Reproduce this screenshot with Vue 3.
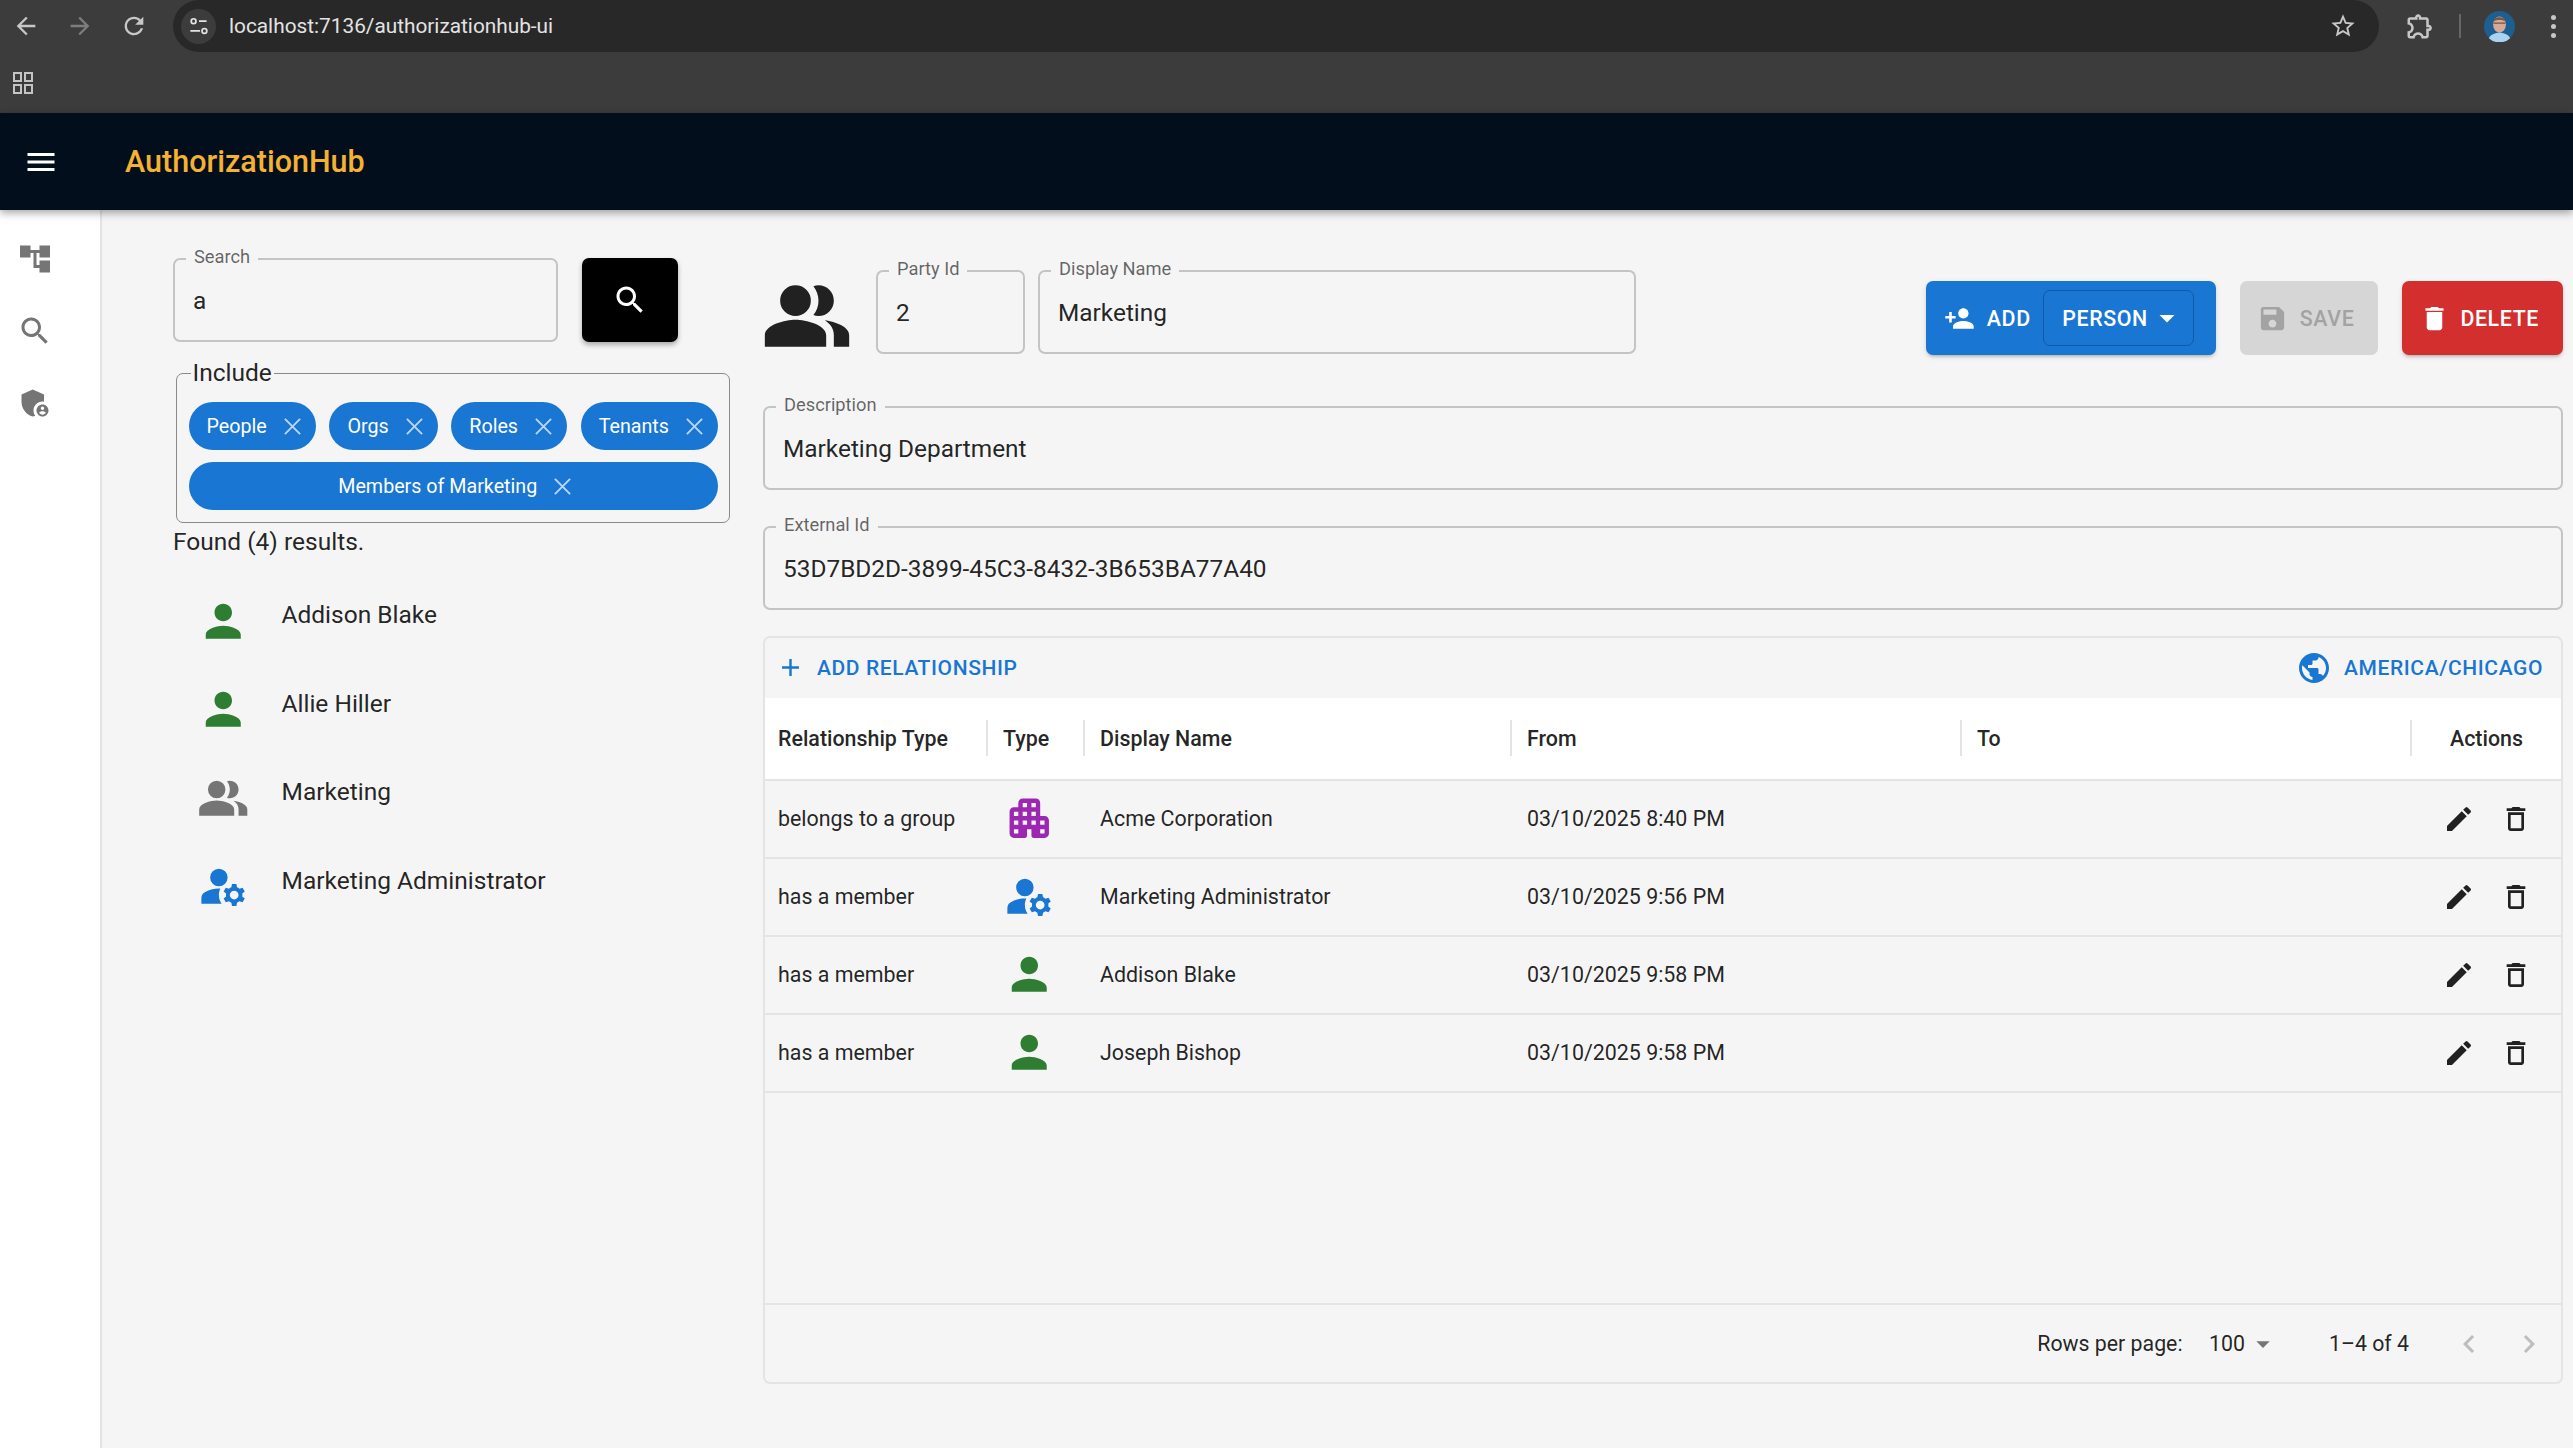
<script setup>
// material icon paths used all over the page
const icons = {
  back: 'M20 11H7.83l5.59-5.59L12 4l-8 8 8 8 1.41-1.41L7.83 13H20v-2z',
  forward: 'M4 11h12.17l-5.59-5.59L12 4l8 8-8 8-1.41-1.41L16.17 13H4v-2z',
  reload: 'M17.65 6.35C16.2 4.9 14.21 4 12 4c-4.42 0-7.99 3.58-7.99 8s3.57 8 7.99 8c3.73 0 6.84-2.55 7.73-6h-2.08c-.82 2.33-3.04 4-5.65 4-3.31 0-6-2.69-6-6s2.69-6 6-6c1.66 0 3.14.69 4.22 1.78L13 11h7V4l-2.35 2.35z',
  star: 'M22 9.24l-7.19-.62L12 2 9.19 8.63 2 9.24l5.46 4.73L5.82 21 12 17.27 18.18 21l-1.63-7.03L22 9.24zM12 15.4l-3.76 2.27 1-4.28-3.32-2.88 4.38-.38L12 6.1l1.71 4.04 4.38.38-3.32 2.88 1 4.28L12 15.4z',
  puzzle: 'M10.5 4.5c.28 0 .5.22.5.5v2h6v6h2c.28 0 .5.22.5.5s-.22.5-.5.5h-2v6h-2.12c-.68-1.75-2.39-3-4.38-3s-3.7 1.25-4.38 3H4v-2.12c1.75-.68 3-2.39 3-4.38 0-1.99-1.24-3.7-2.99-4.38L4 7h6V5c0-.28.22-.5.5-.5m0-2C9.12 2.5 8 3.62 8 5H4c-1.1 0-1.99.9-1.99 2v3.8h.29c1.49 0 2.7 1.21 2.7 2.7s-1.21 2.7-2.7 2.7H2V20c0 1.1.9 2 2 2h3.8v-.3c0-1.49 1.21-2.7 2.7-2.7s2.7 1.21 2.7 2.7v.3H17c1.1 0 2-.9 2-2v-4c1.38 0 2.5-1.12 2.5-2.5S20.38 11 19 11V7c0-1.1-.9-2-2-2h-4c0-1.38-1.12-2.5-2.5-2.5z',
  menu: 'M3 18h18v-2H3v2zm0-5h18v-2H3v2zm0-7v2h18V6H3z',
  tree: 'M22 11V3h-7v3H9V3H2v8h7V8h2v10h4v3h7v-8h-7v3h-2V8h2v3z',
  search: 'M15.5 14h-.79l-.28-.27C15.41 12.59 16 11.11 16 9.5 16 5.91 13.09 3 9.5 3S3 5.91 3 9.5 5.91 16 9.5 16c1.61 0 3.09-.59 4.23-1.57l.27.28v.79l5 4.99L20.49 19l-4.99-5zm-6 0C7.01 14 5 11.99 5 9.5S7.01 5 9.5 5 14 7.01 14 9.5 11.99 14 9.5 14z',
  shield: 'M17 11c.34 0 .67.04 1 .09V6.27L10.5 3 3 6.27v4.91c0 4.54 3.2 8.79 7.5 9.82.55-.13 1.08-.32 1.6-.55-.69-.98-1.1-2.17-1.1-3.45 0-3.31 2.69-6 6-6zM17 13c-2.21 0-4 1.79-4 4s1.79 4 4 4 4-1.79 4-4-1.79-4-4-4m0 1.38c.62 0 1.12.51 1.12 1.12s-.51 1.12-1.12 1.12-1.12-.51-1.12-1.12.5-1.12 1.12-1.12m0 5.37c-.93 0-1.74-.46-2.24-1.17.05-.72 1.51-1.08 2.24-1.08s2.19.36 2.24 1.08c-.5.71-1.31 1.17-2.24 1.17z',
  person: 'M12 12c2.21 0 4-1.79 4-4s-1.79-4-4-4-4 1.79-4 4 1.79 4 4 4m0 2c-2.67 0-8 1.34-8 4v2h16v-2c0-2.66-5.33-4-8-4z',
  people: 'M16.67 13.13C18.04 14.06 19 15.32 19 17v3h4v-3c0-2.18-3.57-3.47-6.33-3.87zM13 8a4 4 0 1 1-8 0 4 4 0 0 1 8 0zM15 12c2.21 0 4-1.79 4-4s-1.79-4-4-4c-.47 0-.91.1-1.33.24C14.5 5.27 15 6.58 15 8s-.5 2.73-1.33 3.76c.42.14.86.24 1.33.24zM9 13c-2.67 0-8 1.34-8 4v3h16v-3c0-2.66-5.33-4-8-4z',
  admin: 'M14 8a4 4 0 1 1-8 0 4 4 0 0 1 8 0zM10.67 13.02c-.22-.01-.44-.02-.67-.02-2.42 0-4.68.67-6.61 1.82-.88.52-1.39 1.5-1.39 2.53V20h9.26c-.79-1.13-1.26-2.51-1.26-4 0-1.07.25-2.07.67-2.98M20.75 16c0-.22-.03-.42-.06-.63l1.14-1.01-1-1.73-1.45.49c-.32-.27-.68-.48-1.08-.63L18 11h-2l-.3 1.49c-.4.15-.76.36-1.08.63l-1.45-.49-1 1.73 1.14 1.01c-.03.21-.06.41-.06.63s.03.42.06.63l-1.14 1.01 1 1.73 1.45-.49c.32.27.68.48 1.08.63L16 21h2l.3-1.49c.4-.15.76-.36 1.08-.63l1.45.49 1-1.73-1.14-1.01c.03-.21.06-.41.06-.63M17 18c-1.1 0-2-.9-2-2s.9-2 2-2 2 .9 2 2-.9 2-2 2',
  building: 'M17 11V5c0-1.1-.9-2-2-2H9c-1.1 0-2 .9-2 2v2H5c-1.1 0-2 .9-2 2v10c0 1.1.9 2 2 2h5c.55 0 1-.45 1-1v-3h2v3c0 .55.45 1 1 1h5c1.1 0 2-.9 2-2v-6c0-1.1-.9-2-2-2h-2zM7 19H5v-2h2v2zm0-4H5v-2h2v2zm0-4H5V9h2v2zm4 4H9v-2h2v2zm0-4H9V9h2v2zm0-4H9V5h2v2zm4 8h-2v-2h2v2zm0-4h-2V9h2v2zm0-4h-2V5h2v2zm4 12h-2v-2h2v2zm0-4h-2v-2h2v2z',
  personAdd: 'M15 12c2.21 0 4-1.79 4-4s-1.79-4-4-4-4 1.79-4 4 1.79 4 4 4zm-9-2V7H4v3H1v2h3v3h2v-3h3v-2H6zm9 4c-2.67 0-8 1.34-8 4v2h16v-2c0-2.66-5.33-4-8-4z',
  save: 'M17 3H5c-1.11 0-2 .9-2 2v14c0 1.1.89 2 2 2h14c1.1 0 2-.9 2-2V7l-4-4zm-5 16c-1.66 0-3-1.34-3-3s1.34-3 3-3 3 1.34 3 3-1.34 3-3 3zm3-10H5V5h10v4z',
  trash: 'M6 19c0 1.1.9 2 2 2h8c1.1 0 2-.9 2-2V7H6v12zM19 4h-3.5l-1-1h-5l-1 1H5v2h14V4z',
  trashOutline: 'M6 19c0 1.1.9 2 2 2h8c1.1 0 2-.9 2-2V7H6zM8 9h8v10H8zm7.5-5-1-1h-5l-1 1H5v2h14V4z',
  edit: 'M3 17.25V21h3.75L17.81 9.94l-3.75-3.75zM20.71 7.04c.39-.39.39-1.02 0-1.41l-2.34-2.34a.996.996 0 0 0-1.41 0l-1.83 1.83 3.75 3.75z',
  plus: 'M19 13h-6v6h-2v-6H5v-2h6V5h2v6h6v2z',
  globe: 'M12 2C6.48 2 2 6.48 2 12s4.48 10 10 10 10-4.48 10-10S17.52 2 12 2zm-1 17.93c-3.95-.49-7-3.85-7-7.93 0-.62.08-1.21.21-1.79L9 15v1c0 1.1.9 2 2 2v1.93zm6.9-2.54c-.26-.81-1-1.39-1.9-1.39h-1v-3c0-.55-.45-1-1-1H8v-2h2c.55 0 1-.45 1-1V7h2c1.1 0 2-.9 2-2v-.41c2.93 1.19 5 4.06 5 7.41 0 2.08-.8 3.97-2.1 5.39z',
  caret: 'M7 10l5 5 5-5z',
  chevLeft: 'M15.41 7.41 14 6l-6 6 6 6 1.41-1.41L10.83 12z',
  chevRight: 'M10 6 8.59 7.41 13.17 12l-4.58 4.59L10 18l6-6z'
}

const filters = ['People', 'Orgs', 'Roles', 'Tenants']

const results = [
  { name: 'Addison Blake', icon: 'person', tone: 'green' },
  { name: 'Allie Hiller', icon: 'person', tone: 'green' },
  { name: 'Marketing', icon: 'people', tone: 'grey' },
  { name: 'Marketing Administrator', icon: 'admin', tone: 'blue' }
]

const columns = ['Relationship Type', 'Type', 'Display Name', 'From', 'To', 'Actions']

const relationships = [
  { rel: 'belongs to a group', icon: 'building', tone: 'purple', name: 'Acme Corporation', from: '03/10/2025 8:40 PM' },
  { rel: 'has a member', icon: 'admin', tone: 'blue', name: 'Marketing Administrator', from: '03/10/2025 9:56 PM' },
  { rel: 'has a member', icon: 'person', tone: 'green', name: 'Addison Blake', from: '03/10/2025 9:58 PM' },
  { rel: 'has a member', icon: 'person', tone: 'green', name: 'Joseph Bishop', from: '03/10/2025 9:58 PM' }
]
</script>

<template>
  <div class="page">
    <!-- browser chrome -->
    <header class="browser">
      <div class="toolbar">
        <svg class="nav" viewBox="0 0 24 24"><path :d="icons.back" /></svg>
        <svg class="nav dim" viewBox="0 0 24 24"><path :d="icons.forward" /></svg>
        <svg class="nav" viewBox="0 0 24 24"><path :d="icons.reload" /></svg>
        <div class="address">
          <span class="site-info">
            <svg viewBox="0 0 24 24" stroke="#e3e3e3" stroke-width="1.6">
              <circle cx="7" cy="7.5" r="2.2" />
              <path d="M12 7.5h7M4 16.5h9" />
              <circle cx="17" cy="16.5" r="2.2" />
            </svg>
          </span>
          <span class="url">localhost:7136/authorizationhub-ui</span>
          <svg class="star" viewBox="0 0 24 24"><path :d="icons.star" /></svg>
        </div>
        <svg class="puzzle" viewBox="0 0 24 24"><path :d="icons.puzzle" /></svg>
        <span class="sep"></span>
        <svg class="avatar" viewBox="0 0 32 32">
          <circle cx="16" cy="16" r="16" fill="#1d5f90" />
          <ellipse cx="16" cy="14" rx="6.6" ry="8.4" fill="#d9a993" />
          <path d="M9.5 11c0-6 13-6 13 0-2-2.400-11-2.400-13 0z" fill="#6d5a50" />
          <path d="M10 12.500h5M17 12.500h5M15 12.500h2" stroke="#4a3b36" stroke-width="1" fill="none" />
          <path d="M5 28c2-4 7-5.500 11-5.500s9 1.500 11 5.500a16 16 0 0 1-22 0z" fill="#a9d3f0" />
        </svg>
        <span class="kebab"><i></i><i></i><i></i></span>
      </div>
      <div class="bookmarks">
        <svg class="apps" viewBox="0 0 20 22" stroke="#c4c4c4" stroke-width="2">
          <rect x="1" y="1" width="7" height="8" />
          <rect x="12" y="1" width="7" height="8" />
          <rect x="1" y="13" width="7" height="8" />
          <rect x="12" y="13" width="7" height="8" />
        </svg>
      </div>
    </header>

    <header class="appbar">
      <svg class="hamburger" viewBox="0 0 24 24"><path :d="icons.menu" /></svg>
      <div class="brand">AuthorizationHub</div>
    </header>

    <div class="body">
      <nav class="rail">
        <svg viewBox="0 0 24 24"><path :d="icons.tree" /></svg>
        <svg viewBox="0 0 24 24"><path :d="icons.search" /></svg>
        <svg viewBox="0 0 24 24"><path :d="icons.shield" /></svg>
      </nav>

      <main class="main">
        <!-- left: search + results -->
        <section class="finder">
          <div class="search-row">
            <div class="field search-field">
              <label>Search</label>
              <span class="value">a</span>
            </div>
            <button class="search-btn">
              <svg viewBox="0 0 24 24"><path :d="icons.search" /></svg>
            </button>
          </div>

          <fieldset class="include">
            <legend>Include</legend>
            <div class="chips">
              <span v-for="f in filters" :key="f" class="chip">
                {{ f }}
                <svg viewBox="0 0 20 20"><path d="M2 2l16 16M18 2L2 18" /></svg>
              </span>
              <span class="chip wide">
                Members of Marketing
                <svg viewBox="0 0 20 20"><path d="M2 2l16 16M18 2L2 18" /></svg>
              </span>
            </div>
          </fieldset>

          <div class="found">Found (4) results.</div>

          <ul class="results">
            <li v-for="r in results" :key="r.name">
              <svg :class="['party-icon', r.tone]" viewBox="0 0 24 24"><path :d="icons[r.icon]" /></svg>
              <span class="result-name">{{ r.name }}</span>
            </li>
          </ul>
        </section>

        <!-- right: party details -->
        <section class="detail">
          <div class="head-row">
            <svg class="head-icon" viewBox="0 0 24 24"><path :d="icons.people" /></svg>
            <div class="field party-id">
              <label>Party Id</label>
              <span class="value">2</span>
            </div>
            <div class="field display-name">
              <label>Display Name</label>
              <span class="value">Marketing</span>
            </div>
            <div class="actions">
              <div class="btn primary add">
                <svg viewBox="0 0 24 24"><path :d="icons.personAdd" /></svg>
                <span>ADD</span>
                <div class="add-type">
                  <span>PERSON</span>
                  <svg viewBox="0 0 24 24"><path :d="icons.caret" /></svg>
                </div>
              </div>
              <div class="btn disabled">
                <svg viewBox="0 0 24 24"><path :d="icons.save" /></svg>
                <span>SAVE</span>
              </div>
              <div class="btn danger">
                <svg viewBox="0 0 24 24"><path :d="icons.trash" /></svg>
                <span>DELETE</span>
              </div>
            </div>
          </div>

          <div class="field description">
            <label>Description</label>
            <span class="value">Marketing Department</span>
          </div>
          <div class="field external">
            <label>External Id</label>
            <span class="value">53D7BD2D-3899-45C3-8432-3B653BA77A40</span>
          </div>

          <div class="grid-card">
            <div class="grid-toolbar">
              <div class="link">
                <svg class="plus" viewBox="0 0 24 24"><path :d="icons.plus" /></svg>
                <span>ADD RELATIONSHIP</span>
              </div>
              <div class="link">
                <svg class="globe" viewBox="0 0 24 24"><path :d="icons.globe" /></svg>
                <span>AMERICA/CHICAGO</span>
              </div>
            </div>

            <div class="grid-head">
              <div v-for="c in columns" :key="c" :class="['th', { center: c === 'Actions' }]">{{ c }}</div>
            </div>

            <div v-for="row in relationships" :key="row.name" class="grid-row">
              <div class="td">{{ row.rel }}</div>
              <div class="td"><svg :class="['party-icon', row.tone]" viewBox="0 0 24 24"><path :d="icons[row.icon]" /></svg></div>
              <div class="td">{{ row.name }}</div>
              <div class="td">{{ row.from }}</div>
              <div class="td"></div>
              <div class="td row-actions">
                <svg viewBox="0 0 24 24"><path :d="icons.edit" /></svg>
                <svg viewBox="0 0 24 24"><path :d="icons.trashOutline" /></svg>
              </div>
            </div>

            <div class="grid-spacer"></div>

            <div class="grid-footer">
              <span class="rows-label">Rows per page:</span>
              <span class="rows-value">100</span>
              <svg class="rows-caret" viewBox="0 0 24 24"><path :d="icons.caret" /></svg>
              <span class="range">1–4 of 4</span>
              <svg class="pager first" viewBox="0 0 24 24"><path :d="icons.chevLeft" /></svg>
              <svg class="pager" viewBox="0 0 24 24"><path :d="icons.chevRight" /></svg>
            </div>
          </div>
        </section>
      </main>
    </div>
  </div>
</template>

<style>
html, body { margin: 0; padding: 0; }
</style>

<style scoped>
.page {
  width: 100vw; height: 100vh; overflow: hidden;
  display: flex; flex-direction: column;
  background: #f5f5f5; color: rgba(0,0,0,.87);
  font-family: Roboto, "Liberation Sans", sans-serif;
}
svg { display: block; fill: currentColor; flex: none; }

/* browser chrome */
.browser { background: #3c3c3c; height: 113px; flex: none; }
.toolbar { height: 52px; display: flex; align-items: center; padding-left: 12px; color: #c7c7c7; }
.nav { width: 28px; height: 28px; margin-right: 26px; }
.nav.dim { color: #7d7d7d; }
.address {
  width: 2206px; height: 52px; margin-left: -1px; box-sizing: border-box;
  display: flex; align-items: center; padding: 0 22px 0 8px;
  background: #282828; border-radius: 26px;
}
.site-info {
  width: 35px; height: 35px; border-radius: 50%; background: #3c3c3c;
  display: flex; align-items: center; justify-content: center;
}
.site-info svg { width: 26px; height: 26px; fill: none; }
.url { margin-left: 13px; flex: 1; color: #e3e3e3; font-size: 20.8px; }
.star { width: 28px; height: 28px; }
.puzzle { width: 30px; height: 30px; margin-left: 26px; }
.sep { width: 2px; height: 24px; background: #666; margin-left: 24px; }
.avatar { width: 31px; height: 31px; margin-left: 23px; }
.kebab { margin-left: 36px; display: flex; flex-direction: column; gap: 4px; }
.kebab i { width: 5px; height: 5px; border-radius: 50%; background: #c7c7c7; display: block; }
.bookmarks { height: 61px; display: flex; align-items: center; padding-left: 13px; }
.apps { width: 20px; height: 22px; fill: none; }

/* app bar */
.appbar {
  height: 97px; flex: none; display: flex; align-items: center;
  background: #020e1c; color: #fff; position: relative; z-index: 2;
  box-shadow: 0 3px 8px rgba(0,0,0,.35);
}
.hamburger { width: 36px; height: 36px; margin-left: 23px; }
.brand { margin-left: 66px; font-size: 30.5px; font-weight: 500; color: #f4b132; }

.body { flex: 1; display: flex; min-height: 0; }

/* left rail */
.rail {
  width: 83px; flex: none; background: #fff; border-right: 2px solid #e4e4e4;
  display: flex; flex-direction: column; gap: 36px;
  padding: 31px 0 0 17px; color: #757575;
}
.rail svg { width: 36px; height: 36px; }

.main { flex: 1; display: flex; padding: 48px 10px 0 71px; min-width: 0; }

/* shared outlined field */
.field {
  position: relative; height: 84px; box-sizing: border-box;
  border: 2px solid #c4c4c4; border-radius: 7px;
  display: flex; align-items: center; padding: 0 18px; font-size: 24.4px;
}
.field label {
  position: absolute; top: -15px; left: 11px; padding: 0 8px;
  background: #f5f5f5; font-size: 18.3px; line-height: 24px; color: rgba(0,0,0,.6);
}

/* finder column */
.finder { width: 558px; flex: none; margin-right: 32px; }
.search-row { display: flex; gap: 24px; }
.search-field { width: 385px; }
.search-btn {
  width: 96px; height: 84px; border: 0; border-radius: 7px; padding: 0;
  background: #000; color: #fff;
  display: flex; align-items: center; justify-content: center;
  box-shadow: 0 3px 5px rgba(0,0,0,.3);
}
.search-btn svg { width: 36px; height: 36px; }

.include {
  margin: 16px 0 0 3px; width: 554px; box-sizing: border-box;
  border: 1.5px solid #8a8a8a; border-radius: 7px; padding: 14px 11px 12px 11.5px;
}
.include legend { font-size: 24.5px; padding: 0 2px; line-height: 30px; margin-left: 2px; }
.chips { display: flex; flex-wrap: wrap; gap: 12px; justify-content: space-between; }
.chip {
  height: 48px; border-radius: 24px; padding: 0 14px 0 18px; box-sizing: border-box;
  display: inline-flex; align-items: center; justify-content: center; gap: 16px;
  background: #1976d2; color: #fff; font-size: 19.7px;
}
.chip.wide { flex: 0 0 100%; }
.chip svg { width: 19px; height: 19px; fill: none; stroke: rgba(255,255,255,.7); stroke-width: 2; }

.found { font-size: 24.5px; line-height: 38px; }

.results { list-style: none; margin: 15.5px 0 0; padding: 0; }
.results li { height: 88.6px; display: flex; align-items: center; padding-left: 24px; }
.result-name { margin-left: 32px; font-size: 24.5px; padding-bottom: 12px; }
.party-icon { width: 52.5px; height: 52.5px; }
.green { color: #2e7d32; }
.blue { color: #1976d2; }
.grey { color: #757575; }
.purple { color: #9c27b0; }

/* detail column */
.detail { flex: 1; min-width: 0; display: flex; flex-direction: column; }
.head-row { display: flex; align-items: flex-start; margin-top: 12px; height: 84px; }
.head-icon { width: 92px; height: 92px; color: #212121; margin-left: -2px; }
.party-id { width: 149px; margin-left: 23px; }
.display-name { width: 598px; margin-left: 13px; }
.actions { margin-left: auto; display: flex; gap: 24px; margin-top: 11px; }
.btn {
  height: 74px; border-radius: 7px; box-sizing: border-box;
  display: flex; align-items: center; font-size: 21.4px; font-weight: 500;
  letter-spacing: .6px; color: #fff; padding: 0 25px 0 17px;
  box-shadow: 0 3px 3px -2px rgba(0,0,0,.2), 0 2px 5px rgba(0,0,0,.14);
}
.btn > svg { width: 31px; height: 31px; margin-right: 12px; }
.btn.primary { background: #1976d2; }
.btn.danger { background: #d32f2f; padding-right: 24px; }
.btn.danger > svg { margin-right: 10.500px; }
.btn.disabled { background: #d6d6d6; color: #a3a3a3; box-shadow: none; padding-right: 23.500px; }
.add { width: 290px; padding: 0 0 0 18px; }
.add-type {
  width: 151px; height: 56px; box-sizing: border-box; margin-left: 12px;
  border: 1.5px solid #1259a8; border-radius: 7px;
  display: flex; align-items: center; padding-left: 18.500px;
}
.add-type svg { width: 36px; height: 36px; margin-left: 1px; }

.description { margin-top: 52px; }
.external { margin-top: 36px; }

/* relationships grid */
.grid-card {
  margin-top: 25.500px; height: 748.500px; box-sizing: border-box;
  border: 2px solid #e4e4e4; border-radius: 7px;
  display: flex; flex-direction: column; font-size: 21.4px;
}
.grid-toolbar {
  height: 60px; flex: none; display: flex; align-items: center; justify-content: space-between;
  padding: 0 18px 0 11px;
}
.link { display: flex; align-items: center; color: #1976d2; font-weight: 500; font-size: 21px; letter-spacing: .6px; }
.plus { width: 29px; height: 29px; margin-right: 12px; }
.globe { width: 36px; height: 36px; margin-right: 12px; }

.grid-head, .grid-row {
  display: grid; grid-template-columns: 223px 97px 427px 450px 450px 1fr;
  border-bottom: 2px solid #e4e4e4; box-sizing: border-box;
}
.grid-head { height: 83px; background: #fff; align-items: center; flex: none; }
.th {
  height: 36px; display: flex; align-items: center; padding-left: 15px;
  font-weight: 500; border-right: 2px solid #e4e4e4; box-sizing: border-box;
}
.th:first-child, .td:first-child { padding-left: 13px; }
.th.center { justify-content: center; padding-left: 0; border-right: 0; }
.grid-row { height: 78px; align-items: center; flex: none; }
.td { padding-left: 15px; display: flex; align-items: center; }
.row-actions { gap: 25px; padding-left: 31px; }
.row-actions svg { width: 32px; height: 32px; color: #212121; }

.grid-spacer { flex: 1; }
.grid-footer {
  height: 79px; flex: none; border-top: 2px solid #e4e4e4; box-sizing: border-box;
  display: flex; align-items: center; justify-content: flex-end; padding-right: 14px;
  font-size: 21.3px;
}
.rows-value { margin-left: 26.5px; }
.rows-caret { width: 32px; height: 32px; color: #757575; margin-left: 2px; }
.range { margin-left: 50px; }
.pager { width: 36px; height: 36px; color: #bdbdbd; margin-left: 24px; }
.pager.first { margin-left: 42px; }
</style>
